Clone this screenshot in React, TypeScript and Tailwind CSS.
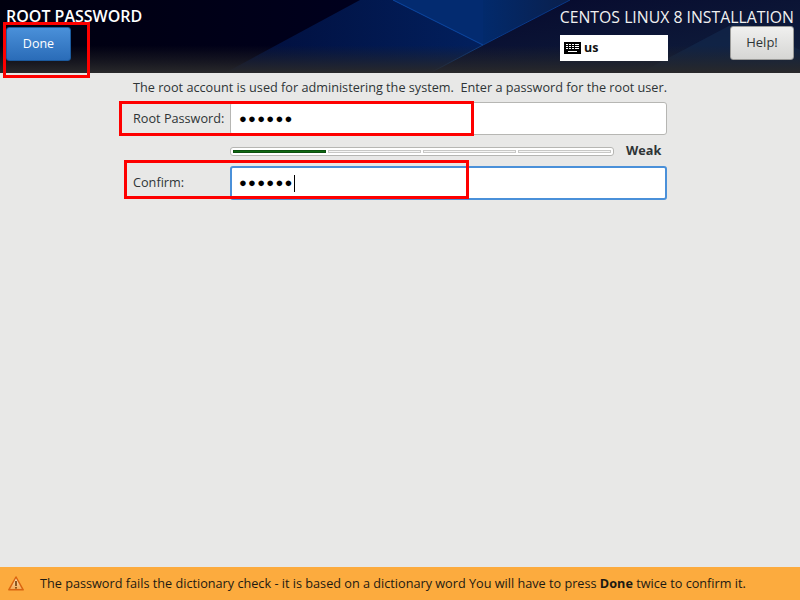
function Segment({ filled }: { filled?: boolean }) {
  return <div className={filled ? "h-full flex-1 border border-[#0b4f0f] bg-[#0e6a12]" : "h-full flex-1 border border-[#c8c8c6] bg-[#f6f6f5]"} />;
}

export default function App() {
  return (
    <div className="relative flex h-[600px] w-[800px] flex-col overflow-hidden bg-[#e8e8e7] font-['Open_Sans',sans-serif] text-[#2e3436]">
      <header className="relative flex h-[73px] shrink-0 justify-between overflow-hidden bg-[#020824] pl-[6px] pr-[6px]">
        <svg className="absolute inset-0" width="800" height="73" viewBox="0 0 800 73">
          <defs>
            <linearGradient id="fade" x1="0" y1="0" x2="0" y2="1">
              <stop offset="0" stopColor="#222224" stopOpacity="0" />
              <stop offset="0.62" stopColor="#222224" stopOpacity="0" />
              <stop offset="1" stopColor="#29292b" stopOpacity="1" />
            </linearGradient>
            <linearGradient id="lft" x1="0" y1="0" x2="1" y2="0">
              <stop offset="0" stopColor="#00000f" />
              <stop offset="0.5" stopColor="#00001f" />
              <stop offset="1" stopColor="#010a30" />
            </linearGradient>
            <linearGradient id="nav" x1="0" y1="0" x2="1" y2="0">
              <stop offset="0" stopColor="#010d3a" />
              <stop offset="1" stopColor="#02205e" />
            </linearGradient>
            <linearGradient id="upr" x1="0" y1="0" x2="1" y2="0">
              <stop offset="0" stopColor="#022a6c" />
              <stop offset="1" stopColor="#0a1f4c" />
            </linearGradient>
            <linearGradient id="rgt" x1="0" y1="0" x2="1" y2="1">
              <stop offset="0" stopColor="#06082c" />
              <stop offset="1" stopColor="#10203e" />
            </linearGradient>
          </defs>
          <rect width="800" height="73" fill="url(#lft)" />
          <polygon points="360,0 393,0 483,45 430,73 225,73" fill="url(#nav)" />
          <polygon points="393,0 483,0 483,45" fill="#032b70" />
          <polygon points="483,0 570,0 483,45" fill="url(#upr)" />
          <polygon points="570,0 800,0 800,73 430,73 483,45" fill="url(#rgt)" />
          <polygon points="640,73 740,20 800,50 800,73" fill="#12284c" opacity="0.7" />
          <line x1="393" y1="0" x2="483" y2="45" stroke="#0d4aa6" strokeWidth="1" />
          <line x1="483" y1="45" x2="570" y2="0" stroke="#0a3a8a" strokeWidth="1" />
          <line x1="483" y1="45" x2="430" y2="73" stroke="#0f3f88" strokeWidth="1" />
          <rect width="800" height="73" fill="url(#fade)" />
        </svg>
        <div className="relative flex flex-col">
          <h1 className="mt-[8px] text-[16px] leading-[17px] font-semibold whitespace-nowrap text-white">ROOT PASSWORD</h1>
          <button className="mt-[2px] h-[34px] w-[65px] rounded-[3px] border border-[#1b5a9e] bg-gradient-to-b from-[#4a90d9] to-[#2a6cb8] text-[12.5px] text-white">Done</button>
        </div>
        <div className="relative flex w-[234px] flex-col items-end">
          <div className="mt-[7px] text-[15.8px] leading-[20px] whitespace-nowrap text-[#f0f0f0]">CENTOS LINUX 8 INSTALLATION</div>
          <div className="flex w-full items-start justify-between">
            <div className="mt-[8px] flex h-[26px] w-[108px] items-center gap-[3px] bg-white pl-[4px] text-[12.5px] font-bold text-[#111]">
              <svg width="17" height="12" viewBox="0 0 17 12" shapeRendering="crispEdges">
                <rect width="17" height="12" rx="1" fill="#000" />
                <g fill="#fff">
                  <rect x="2" y="2" width="2" height="1" /><rect x="5" y="2" width="2" height="1" /><rect x="8" y="2" width="2" height="1" /><rect x="11" y="2" width="4" height="1" />
                  <rect x="2" y="4" width="2" height="1" /><rect x="5" y="4" width="2" height="1" /><rect x="8" y="4" width="2" height="1" /><rect x="11" y="4" width="4" height="1" />
                  <rect x="2" y="6" width="2" height="1" /><rect x="5" y="6" width="2" height="1" /><rect x="8" y="6" width="2" height="1" /><rect x="11" y="6" width="4" height="1" />
                  <rect x="4" y="9" width="9" height="1" />
                </g>
              </svg>
              us
            </div>
            <button className="mt-[-1px] h-[34px] w-[64px] rounded-[3px] border border-[#9a9a98] bg-gradient-to-b from-[#f0f0ef] to-[#d6d6d4] text-[13px] text-[#2e3436]">Help!</button>
          </div>
        </div>
      </header>

      <main className="ml-[133px] flex w-[534px] flex-1 flex-col text-[12.68px]">
        <p className="mt-[6px] h-[23px] leading-[17px] whitespace-pre">The root account is used for administering the system.  Enter a password for the root user.</p>
        <div className="flex h-[33px] items-center">
          <label className="w-[97px] shrink-0 pt-[1px]">Root Password:</label>
          <div className="flex h-full flex-1 items-center rounded-[3px] border border-[#b6b6b3] bg-white pl-[8px] text-[13px] tracking-[1.25px] text-black">●●●●●●</div>
        </div>
        <div className="mt-[11px] flex h-[10px] items-center">
          <div className="ml-[97px] flex h-[9px] w-[384px] gap-[2px] rounded-[3px] border border-[#b6b6b3] bg-white px-[2px] py-[2px]">
            <Segment filled />
            <Segment />
            <Segment />
            <Segment />
          </div>
          <span className="ml-[12px] text-[12.68px] font-bold">Weak</span>
        </div>
        <div className="mt-[10px] flex h-[34px] items-center">
          <label className="w-[97px] shrink-0">Confirm:</label>
          <div className="flex h-full flex-1 items-center rounded-[3px] border-2 border-[#4a90d9] bg-white pl-[7px] text-[13px] tracking-[1.25px] text-black">●●●●●●<span className="h-[17px] w-px bg-black" /></div>
        </div>
      </main>

      <footer className="flex h-[33px] shrink-0 items-center bg-[#fcab3e] pl-[8px] text-[12.68px] text-[#1d1a12]">
        <svg width="16" height="15" viewBox="0 0 16 15">
          <defs>
            <linearGradient id="warn" x1="0" y1="0" x2="0" y2="1">
              <stop offset="0" stopColor="#fbe7c4" />
              <stop offset="1" stopColor="#f4a64e" />
            </linearGradient>
          </defs>
          <path d="M8 1 L15.2 13.8 H0.8 Z" fill="url(#warn)" stroke="#d9640f" strokeWidth="1.5" strokeLinejoin="round" />
          <rect x="7.2" y="5" width="1.6" height="5" fill="#6e3d0c" />
          <rect x="7.2" y="11" width="1.6" height="1.6" fill="#6e3d0c" />
        </svg>
        <span className="ml-[16px]">The password fails the dictionary check - it is based on a dictionary word You will have to press <b>Done</b> twice to confirm it.</span>
      </footer>

      <div className="pointer-events-none absolute left-[3px] top-[22px] h-[56px] w-[87px] border-[3px] border-[#fe0000]" />
      <div className="pointer-events-none absolute left-[119px] top-[101px] h-[35px] w-[355px] border-[3px] border-[#fe0000]" />
      <div className="pointer-events-none absolute left-[124px] top-[160px] h-[39px] w-[345px] border-[3px] border-[#fe0000]" />
    </div>
  );
}
